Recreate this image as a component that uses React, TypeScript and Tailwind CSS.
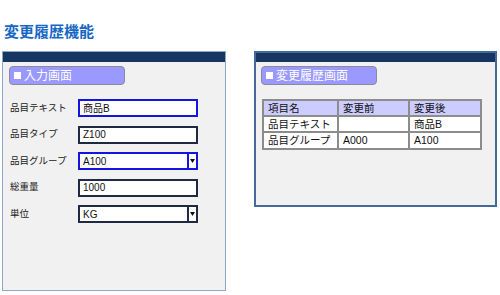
import React from "react";

const font = { fontFamily: '"Liberation Sans", "Noto Sans CJK JP", sans-serif' };

function Field({ label, value, active, select }: { label: string; value: string; active?: boolean; select?: boolean }) {
  return (
    <div className="flex items-center h-[18px]">
      <div className="w-[72px] pl-[4px] text-[9.5px] text-[#222]">{label}</div>
      <div
        className={
          "flex items-stretch w-[120px] h-[18px] bg-white border-2 " +
          (active ? "border-[#1414e0]" : "border-[#1e2a44]")
        }
      >
        <div className="flex-1 flex items-center pl-[3px] text-[10px] text-[#111]">{value}</div>
        {select && (
          <div
            className={
              "w-[9px] flex items-center justify-center border-l-2 " +
              (active ? "border-[#1414e0]" : "border-[#1e2a44]")
            }
          >
            <svg width="5" height="4" viewBox="0 0 5 4">
              <path d="M0 0H5L2.5 4Z" fill="#111" />
            </svg>
          </div>
        )}
      </div>
    </div>
  );
}

function Pill({ text }: { text: string }) {
  return (
    <div className="w-[116px] h-[19px] rounded-[4px] bg-[#9999ff] border border-[#8a8a9a] flex items-center pl-[4px] text-white text-[12px] leading-none">
      <span className="inline-block w-[7px] h-[7px] bg-white mr-[3px]" />
      {text}
    </div>
  );
}

export default function App() {
  const cell = "border-2 border-[#8c8c8c] pl-[4px] text-[10.5px] text-[#111] leading-none";
  return (
    <div className="w-[500px] h-[295px] bg-white relative" style={font}>
      <div className="h-[51px] pt-[24px] pl-[4px] text-[15px] font-bold text-[#1668c4] leading-[16px]">
        変更履歴機能
      </div>
      <div className="flex items-start pl-[2px] gap-[28px]">
        <div className="w-[224px] h-[240px] bg-[#f1f1f1] border border-[#8ea8cb] flex flex-col">
          <div className="h-[10px] bg-[#163560]" />
          <div className="pl-[6px] pt-[4px]">
            <Pill text="入力画面" />
          </div>
          <div className="flex flex-col gap-[8.5px] pt-[14px] pl-[3px]">
            <Field label="品目テキスト" value="商品B" active />
            <Field label="品目タイプ" value="Z100" />
            <Field label="品目グループ" value="A100" active select />
            <Field label="総重量" value="1000" />
            <Field label="単位" value="KG" select />
          </div>
        </div>
        <div className="w-[243px] h-[156px] bg-[#f1f1f1] border-2 border-[#44699b] flex flex-col">
          <div className="h-[9px] bg-[#163560]" />
          <div className="pl-[5px] pt-[4px]">
            <Pill text="変更履歴画面" />
          </div>
          <div className="pl-[6px] pt-[14px]">
            <table className="border-collapse bg-white">
              <tbody>
                <tr className="bg-[#ccccff] h-[16px]">
                  <td className={cell + " w-[75px]"}>項目名</td>
                  <td className={cell + " w-[71px]"}>変更前</td>
                  <td className={cell + " w-[72px]"}>変更後</td>
                </tr>
                <tr className="h-[16px]">
                  <td className={cell}>品目テキスト</td>
                  <td className={cell}></td>
                  <td className={cell}>商品B</td>
                </tr>
                <tr className="h-[17px]">
                  <td className={cell}>品目グループ</td>
                  <td className={cell}>A000</td>
                  <td className={cell}>A100</td>
                </tr>
              </tbody>
            </table>
          </div>
        </div>
      </div>
    </div>
  );
}
